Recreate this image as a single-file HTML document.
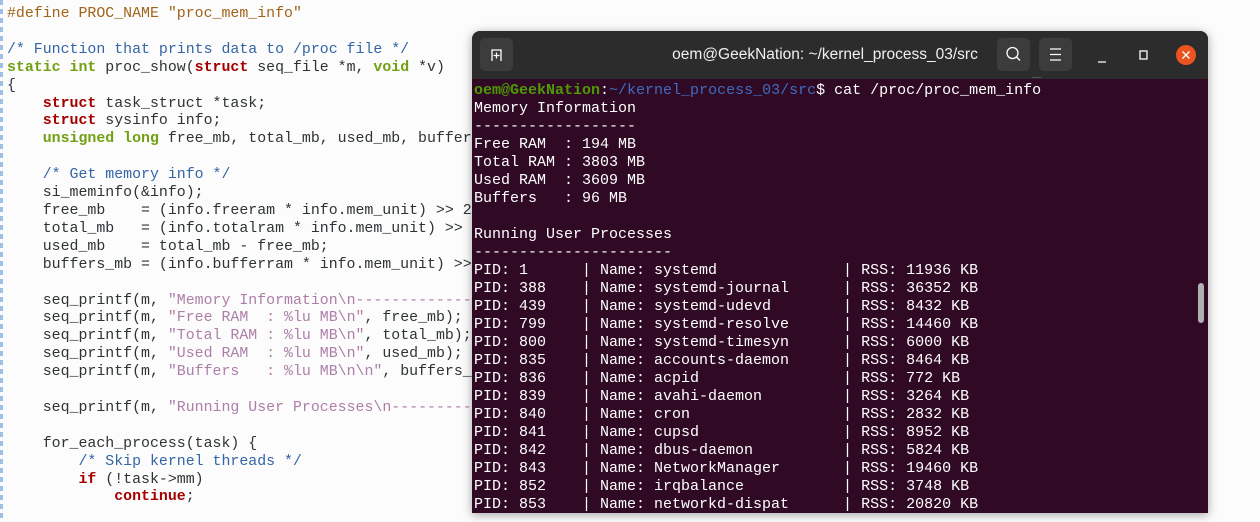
<!DOCTYPE html>
<html><head><meta charset="utf-8"><style>
body{margin:0;width:1260px;height:522px;background:#fcfcfc;position:relative;overflow:hidden;font-family:"Liberation Mono",monospace}
.ed{position:absolute;left:7px;top:6px;font-size:14.9px;line-height:17.9px;color:#2e3436;white-space:pre}
.cm{color:#3465a4}.kg{color:#73a012;font-weight:bold}.kr{color:#a40000;font-weight:bold}.st{color:#ad7fa8}.pp{color:#a0641a}
.gut{position:absolute;left:0;top:0;width:3px;height:522px;background:repeating-linear-gradient(#9ec0e8 0 5px,transparent 5px 9px)}
.term{position:absolute;left:472px;top:31px;width:736px;height:482px;background:#300a24;border-radius:8px 8px 0 0;box-shadow:0 2px 10px rgba(0,0,0,.35);overflow:hidden}
.tb{height:48px;background:#2c2c2c;position:relative;font-family:"Liberation Sans",sans-serif;color:#fff}
.btn{position:absolute;top:7px;width:33px;height:33px;background:#3c3c3c;border-radius:5px}
.title{position:absolute;left:198px;width:310px;top:15px;text-align:center;font-size:15.5px;font-weight:normal;color:#f0f0f0;white-space:nowrap}
.tt{position:absolute;left:2px;top:51px;font-size:15px;line-height:18px;color:#fff;white-space:pre}
.g{color:#4e9a06;font-weight:bold}.b{color:#3f6cc0}
.sb{position:absolute;left:726px;top:252px;width:6px;height:40px;border-radius:3px;background:#b0b0b0}
</style></head><body>
<div class="gut"></div>
<div class="ed"><span class="pp">#define PROC_NAME "proc_mem_info"</span>

<span class="cm">/* Function that prints data to /proc file */</span>
<span class="kg">static int</span> proc_show(<span class="kr">struct</span> seq_file *m, <span class="kg">void</span> *v)
{
    <span class="kr">struct</span> task_struct *task;
    <span class="kr">struct</span> sysinfo info;
    <span class="kg">unsigned long</span> free_mb, total_mb, used_mb, buffers_mb;

    <span class="cm">/* Get memory info */</span>
    si_meminfo(&amp;info);
    free_mb    = (info.freeram * info.mem_unit) &gt;&gt; 20;
    total_mb   = (info.totalram * info.mem_unit) &gt;&gt; 20;
    used_mb    = total_mb - free_mb;
    buffers_mb = (info.bufferram * info.mem_unit) &gt;&gt; 20;

    seq_printf(m, <span class="st">"Memory Information\n-----------------</span>
    seq_printf(m, <span class="st">"Free RAM  : %lu MB\n"</span>, free_mb);
    seq_printf(m, <span class="st">"Total RAM : %lu MB\n"</span>, total_mb);
    seq_printf(m, <span class="st">"Used RAM  : %lu MB\n"</span>, used_mb);
    seq_printf(m, <span class="st">"Buffers   : %lu MB\n\n"</span>, buffers_mb);

    seq_printf(m, <span class="st">"Running User Processes\n-------------</span>

    for_each_process(task) {
        <span class="cm">/* Skip kernel threads */</span>
        <span class="kr">if</span> (!task-&gt;mm)
            <span class="kr">continue</span>;</div>
<div class="term">
<div class="tb">
<div class="btn" style="left:8px"><svg width="33" height="33"><path d="M12 23V12h9v11" stroke="#fff" stroke-width="1.3" fill="none"/><path d="M16.5 14.5v6M13.5 17.5h6" stroke="#fff" stroke-width="1.3"/></svg></div>
<div class="title">oem@GeekNation: ~/kernel_process_03/src</div>
<div class="btn" style="left:525px"><svg width="33" height="33"><circle cx="15.5" cy="15" r="5.5" stroke="#fff" stroke-width="1.3" fill="none"/><path d="M19.5 19l3.5 3.5" stroke="#fff" stroke-width="1.3"/></svg></div>
<div class="btn" style="left:567px"><svg width="33" height="33"><path d="M11 11h11M11 16.5h11M11 22h11" stroke="#fff" stroke-width="1.3"/></svg></div>
<svg style="position:absolute;left:620px;top:12px" width="110" height="26"><path d="M6 19h8" stroke="#fff" stroke-width="1.3"/><rect x="48" y="8" width="7" height="8" stroke="#fff" stroke-width="1.3" fill="none"/><circle cx="94" cy="12" r="10" fill="#e95420"/><path d="M90.5 8.5l7 7M97.5 8.5l-7 7" stroke="#fff" stroke-width="1.3"/></svg>
</div>
<div class="tt" style="top:33px;color:#666">                                                              _</div>
<div class="tt"><span class="g">oem@GeekNation</span>:<span class="b">~/kernel_process_03/src</span>$ cat /proc/proc_mem_info
Memory Information
------------------
Free RAM  : 194 MB
Total RAM : 3803 MB
Used RAM  : 3609 MB
Buffers   : 96 MB

Running User Processes
----------------------
PID: 1      | Name: systemd              | RSS: 11936 KB
PID: 388    | Name: systemd-journal      | RSS: 36352 KB
PID: 439    | Name: systemd-udevd        | RSS: 8432 KB
PID: 799    | Name: systemd-resolve      | RSS: 14460 KB
PID: 800    | Name: systemd-timesyn      | RSS: 6000 KB
PID: 835    | Name: accounts-daemon      | RSS: 8464 KB
PID: 836    | Name: acpid                | RSS: 772 KB
PID: 839    | Name: avahi-daemon         | RSS: 3264 KB
PID: 840    | Name: cron                 | RSS: 2832 KB
PID: 841    | Name: cupsd                | RSS: 8952 KB
PID: 842    | Name: dbus-daemon          | RSS: 5824 KB
PID: 843    | Name: NetworkManager       | RSS: 19460 KB
PID: 852    | Name: irqbalance           | RSS: 3748 KB
PID: 853    | Name: networkd-dispat      | RSS: 20820 KB</div>
<div class="sb"></div>
</div>
</body></html>
